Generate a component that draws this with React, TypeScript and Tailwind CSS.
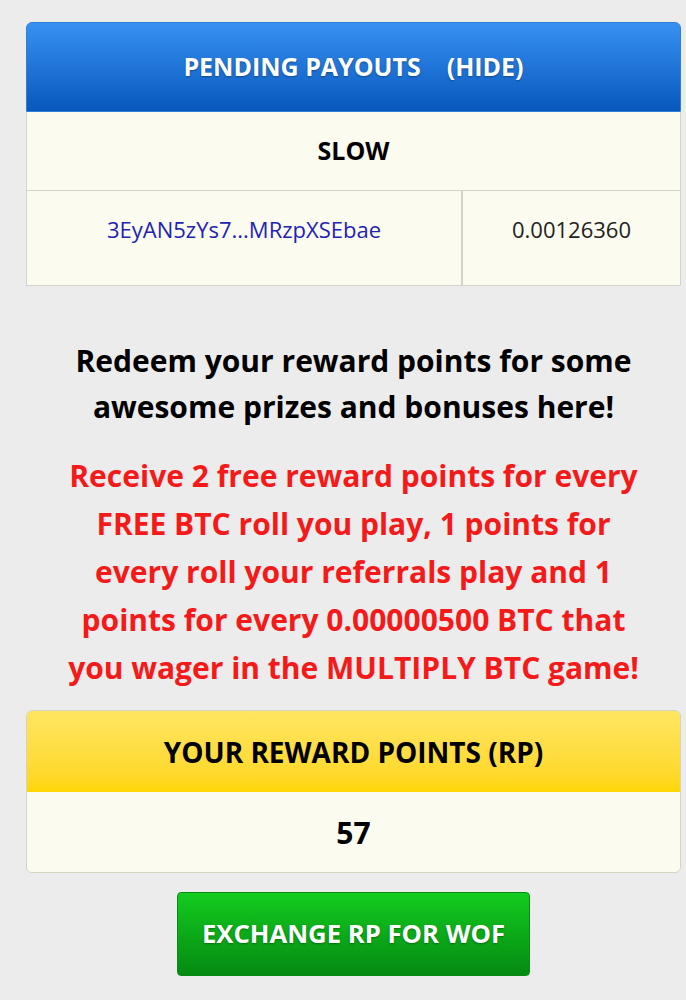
import React from 'react';

const App = () => {
  return (
    <div className="min-h-[1000px] w-[686px] bg-[#ececec] pt-[22px] font-['Open_Sans',sans-serif]">
      {/* Pending payouts */}
      <div className="ml-[26px] w-[655px]">
        <div className="h-[90px] rounded-t-[6px] bg-gradient-to-b from-[#3791f2] to-[#0658bd] border border-[#2f7fd8] flex items-center justify-center">
          <span className="text-white font-bold text-[25px] [text-shadow:0_1px_2px_rgba(0,0,0,0.35)] whitespace-pre">
            PENDING PAYOUTS    (HIDE)
          </span>
        </div>
        <div className="bg-[#fcfbef] border-x border-b border-[#d4d4cc]">
          <div className="h-[79px] flex items-center justify-center border-b border-[#d4d4cc]">
            <span className="font-bold text-[25px] text-black">SLOW</span>
          </div>
          <div className="grid grid-cols-[436px_1fr] h-[94px]">
            <div className="border-r-2 border-[#d4d4cc] flex justify-center pt-[22px]">
              <span className="text-[22px] text-[#2222b4]">3EyAN5zYs7...MRzpXSEbae</span>
            </div>
            <div className="flex justify-center pt-[22px]">
              <span className="text-[22px] text-[#222]">0.00126360</span>
            </div>
          </div>
        </div>
      </div>

      {/* Reward info */}
      <div className="ml-[26px] w-[655px] mt-[52px] text-center font-bold">
        <p className="text-[30px] leading-[46px] text-black">
          Redeem your reward points for some
          <br />
          awesome prizes and bonuses here!
        </p>
        <p className="mt-[22px] text-[30px] leading-[48px] text-[#f41a1a]">
          Receive 2 free reward points for every
          <br />
          FREE BTC roll you play, 1 points for
          <br />
          every roll your referrals play and 1
          <br />
          points for every 0.00000500 BTC that
          <br />
          you wager in the MULTIPLY BTC game!
        </p>
      </div>

      <div className="ml-[26px] w-[655px] mt-[18px] rounded-[6px] border border-[#d6d3c2] overflow-hidden">
        <div className="h-[81px] bg-gradient-to-b from-[#ffe560] to-[#ffd600] flex items-center justify-center">
          <span className="font-bold text-[28px] text-black">YOUR REWARD POINTS (RP)</span>
        </div>
        <div className="h-[80px] bg-[#fcfbef] flex items-center justify-center">
          <span className="font-bold text-[30px] text-black">57</span>
        </div>
      </div>

      <div className="flex justify-center ml-[26px] w-[655px] mt-[19px]">
        <button className="w-[353px] h-[84px] rounded-[4px] bg-gradient-to-b from-[#13cc1f] to-[#058a12] border border-[#0a8a15] text-white font-bold text-[25.7px] [text-shadow:0_1px_2px_rgba(0,0,0,0.35)]">
          EXCHANGE RP FOR WOF
        </button>
      </div>
    </div>
  );
};

export default App;
